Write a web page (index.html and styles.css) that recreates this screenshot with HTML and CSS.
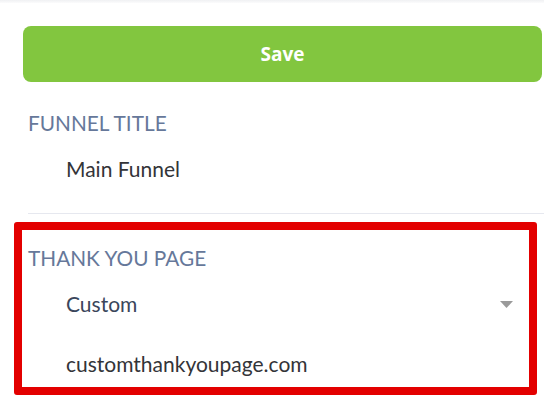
FILE: index.html
```html
<!DOCTYPE html>
<html>
<head>
<meta charset="utf-8">
<link rel="stylesheet" href="styles.css">
</head>
<body>
<div class="topbar"></div>
<main class="panel">
  <button class="save">Save</button>
  <section class="field">
    <div class="label">FUNNEL TITLE</div>
    <div class="value">Main Funnel</div>
  </section>
  <hr class="divider">
  <section class="field highlight">
    <div class="label">THANK YOU PAGE</div>
    <div class="value select">
      <span>Custom</span>
      <svg class="caret" width="13" height="7" viewBox="0 0 13 7"><path d="M0 0h13L6.5 7z" fill="#9a9a9a"/></svg>
    </div>
    <div class="value url">customthankyoupage.com</div>
  </section>
</main>
</body>
</html>
```
FILE: styles.css
```css
*, *::before, *::after { box-sizing: border-box; }
html, body { margin: 0; padding: 0; background: #fff; }
body {
  font-family: Lato, "Open Sans", sans-serif;
  width: 544px;
  height: 402px;
  overflow: hidden;
}
.topbar {
  height: 3px;
  background: linear-gradient(#f0f1f3, #fbfbfc);
}
.panel {
  padding: 23px 2px 0 23px;
  display: flex;
  flex-direction: column;
}
.save {
  height: 56px;
  width: 519px;
  border: none;
  border-radius: 8px;
  background: #82c63f;
  color: #fff;
  font-family: "Open Sans", sans-serif;
  font-weight: 700;
  font-size: 19px;
  padding: 0;
}
.field { display: flex; flex-direction: column; }
.label {
  margin-top: 29px;
  padding-left: 5px;
  font-size: 20.8px;
  color: #66789a;
  line-height: 24px;
}
.value {
  padding-left: 43px;
  font-size: 21px;
  color: #333438;
  line-height: 24px;
  margin-top: 22px;
}
.divider {
  border: none;
  border-top: 1px solid #e6e8ef;
  margin: 32px -2px 0 5px;
}
.highlight { position: relative; }
.highlight .label { margin-top: 32px; }
.highlight::after {
  content: "";
  position: absolute;
  left: -9px;
  top: 8px;
  width: 523px;
  height: 173px;
  border: 8px solid #e30000;
  border-radius: 3px;
}
.select {
  display: flex;
  align-items: center;
  justify-content: space-between;
  color: #3a465b;
  padding-right: 29px;
}
.url { margin-top: 36px; }
```
